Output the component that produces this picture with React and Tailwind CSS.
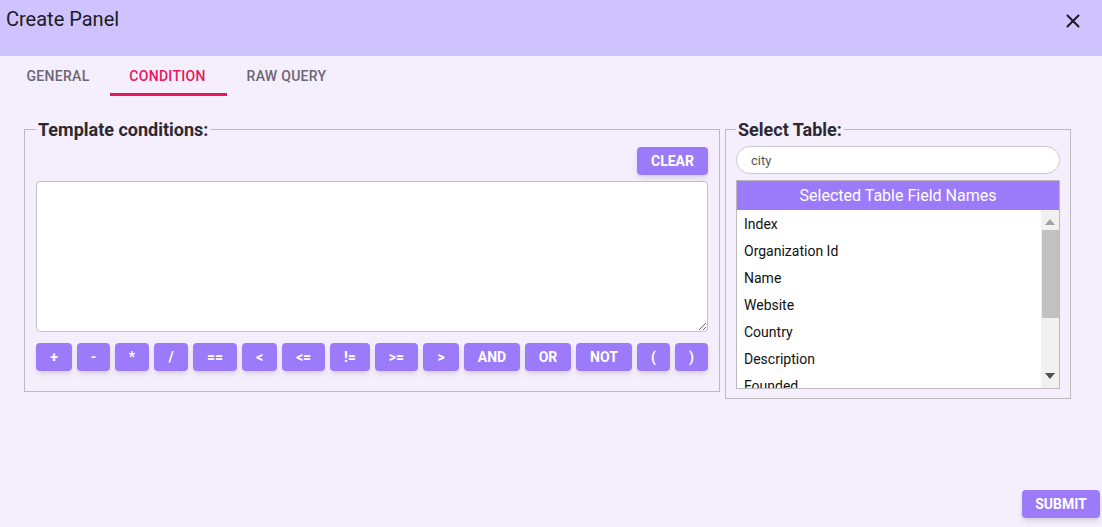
import { X } from "lucide-react";

const ops = ["+", "-", "*", "/", "==", "<", "<=", "!=", ">=", ">", "AND", "OR", "NOT", "(", ")"];
const opWidths = ["w-[36px]", "w-[33px]", "w-[34px]", "w-[34px]", "w-[44px]", "w-[35px]", "w-[43px]", "w-[40px]", "w-[43px]", "w-[36px]", "w-[56px]", "w-[46px]", "w-[56px]", "w-[33px]", "w-[33px]"];
const fields = ["Index", "Organization Id", "Name", "Website", "Country", "Description", "Founded"];

function Scrollbar() {
  return (
    <div className="w-[18px] bg-[#f1f1f1] flex flex-col items-center">
      <svg width="10" height="6" viewBox="0 0 10 6" className="mt-[9px]">
        <path d="M0 6 L5 0 L10 6 Z" fill="#a3a3a3" />
      </svg>
      <div className="mt-[5px] w-[17px] h-[88px] bg-[#c1c1c1]"></div>
      <div className="flex-1"></div>
      <svg width="10" height="6" viewBox="0 0 10 6" className="mb-[9px]">
        <path d="M0 0 L10 0 L5 6 Z" fill="#505050" />
      </svg>
    </div>
  );
}

function App() {
  return (
    <div className="w-[1102px] h-[527px] bg-[#f5eefd] font-['Roboto',sans-serif] flex flex-col overflow-hidden">
      <header className="h-[56px] bg-[#cec3fe] flex items-start justify-between pl-[6px] pr-[18px] pt-[6px]">
        <h1 className="text-[20px] text-[#1d1b20] leading-[26px]">Create Panel</h1>
        <button className="mt-[4px] text-[#1d1b20]">
          <X size={22} strokeWidth={2.2} />
        </button>
      </header>

      <nav className="flex h-[40px] px-[8px] text-[14px] font-medium uppercase tracking-[0.3px]">
        <div className="w-[102px] flex items-center justify-center pr-[2px] text-[#6b6670]">General</div>
        <div className="w-[117px] flex items-center justify-center pr-[2px] text-[#e8175d] border-b-[3px] border-[#e8175d]">
          <span className="mt-[3px]">Condition</span>
        </div>
        <div className="w-[121px] flex items-center justify-center pr-[2px] text-[#6b6670]">Raw Query</div>
      </nav>

      <div className="flex items-start gap-[5px] pl-[24px] pt-[20px]">
        <fieldset className="w-[696px] border border-[#bdbabf] px-[11px] pb-[20px]">
          <legend className="px-[2px] text-[18px] font-bold text-[#2b2930]">Template conditions:</legend>
          <div className="flex justify-end pt-[4px]">
            <button className="w-[71px] h-[28px] rounded bg-[#9b7bf9] text-white text-[14px] font-bold shadow-md">CLEAR</button>
          </div>
          <textarea className="mt-[6px] w-full h-[151px] bg-white border border-[#c4c2c8] rounded resize-y block outline-none"></textarea>
          <div className="flex gap-[5px] mt-[11px]">
            {ops.map((op, i) => (
              <button key={op} className={`${opWidths[i]} h-[28px] rounded bg-[#9b7bf9] text-white text-[14px] font-bold shadow-md`}>
                {op}
              </button>
            ))}
          </div>
        </fieldset>

        <fieldset className="w-[346px] border border-[#bdbabf] px-[10px] pb-[9px]">
          <legend className="px-[2px] text-[18px] font-bold text-[#2b2930]">Select Table:</legend>
          <input
            defaultValue="city"
            className="mt-[3px] w-full h-[28px] rounded-full bg-white border border-[#c9c7cc] px-[14px] text-[13px] text-[#555] outline-none"
          />
          <div className="mt-[6px] border border-[#bdbabf]">
            <div className="h-[29px] bg-[#9b7bf9] text-white text-[16px] flex items-center justify-center">
              Selected Table Field Names
            </div>
            <div className="h-[178px] flex bg-white overflow-hidden">
              <ul className="flex-1 text-[14px] text-[#111] overflow-hidden">
                {fields.map((f) => (
                  <li key={f} className="h-[27px] flex items-center pl-[7px] pt-[2px]">{f}</li>
                ))}
              </ul>
              <Scrollbar />
            </div>
          </div>
        </fieldset>
      </div>

      <div className="flex-1"></div>
      <div className="flex justify-end pr-[2px] pb-[9px]">
        <button className="w-[78px] h-[28px] rounded bg-[#9b7bf9] text-white text-[14px] font-bold shadow-md">SUBMIT</button>
      </div>
    </div>
  );
}

export default App;
